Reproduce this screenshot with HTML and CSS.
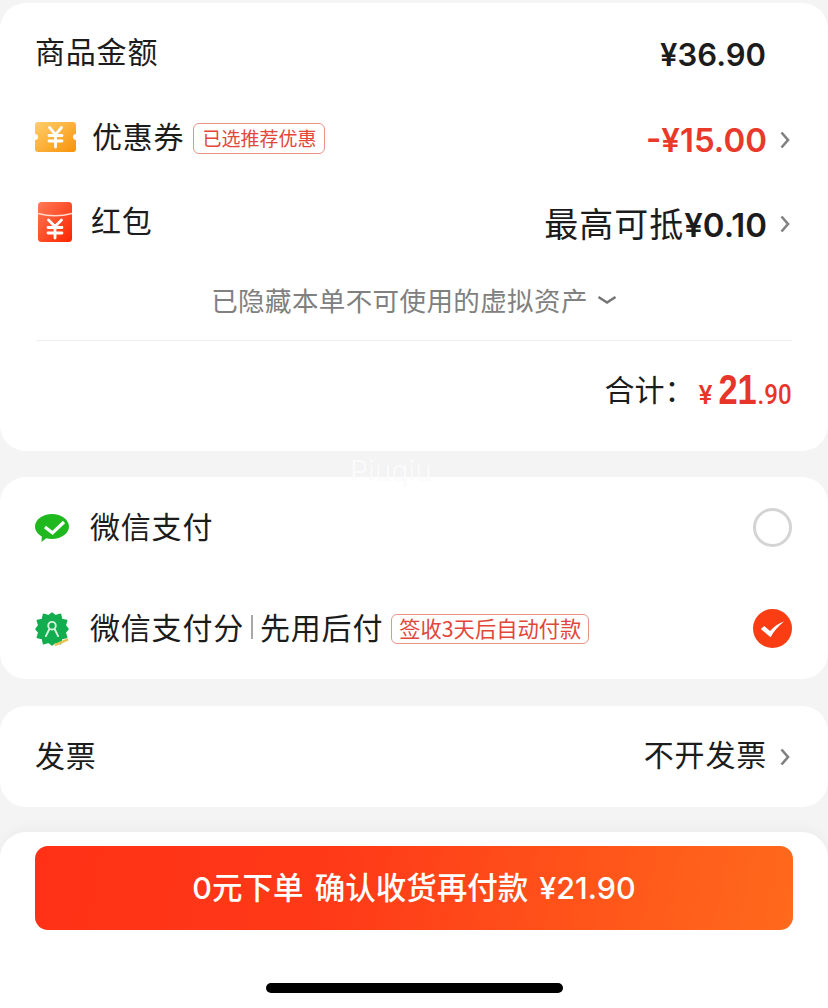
FILE: index.html
```html
<!DOCTYPE html>
<html lang="zh-CN">
<head>
<meta charset="utf-8">
<title>确认订单</title>
<link rel="stylesheet" href="styles.css">
</head>
<body>
<main class="page">
  <section class="card summary">
    <div class="row row-first">
      <span class="label">商品金额</span>
      <span class="amount num">¥36.90</span>
    </div>
    <div class="row row-coupon">
      <div class="lead">
        <svg class="icon-coupon" viewBox="0 0 41 30" aria-hidden="true">
          <defs><linearGradient id="cg" x1="0" y1="0" x2="1" y2="1"><stop offset="0" stop-color="#ffcf6a"/><stop offset="1" stop-color="#f8920a"/></linearGradient></defs>
          <path fill="url(#cg)" d="M3 0H38a3 3 0 0 1 3 3V12a3 3 0 0 0 0 6V27a3 3 0 0 1-3 3H3a3 3 0 0 1-3-3V18a3 3 0 0 0 0-6V3a3 3 0 0 1 3-3Z"/>
          <path fill="none" stroke="#fff" stroke-width="2.800" stroke-linecap="round" d="M14.500 5.500 20.500 12.500 26.500 5.500M14 13.500H27M14 19H27M20.500 13V25"/>
        </svg>
        <span class="label">优惠券</span>
        <span class="tag">已选推荐优惠</span>
      </div>
      <div class="trail">
        <span class="amount num num-lg red">-¥15.00</span>
        <svg class="chev" viewBox="0 0 10 18" aria-hidden="true"><path d="M1.500 1.500 8 9 1.500 16.500"/></svg>
      </div>
    </div>
    <div class="row row-packet">
      <div class="lead">
        <svg class="icon-packet" viewBox="0 0 34 40" aria-hidden="true">
          <defs><linearGradient id="pg" x1="0" y1="0" x2="1" y2="1"><stop offset="0" stop-color="#ff7a55"/><stop offset="1" stop-color="#fb2400"/></linearGradient></defs>
          <rect width="34" height="40" rx="3.500" fill="url(#pg)"/>
          <path fill="none" stroke="#ffd9cc" stroke-width="1.300" d="M0 11.500Q17 16 34 11.500"/>
          <path fill="none" stroke="#fff" stroke-width="2.800" stroke-linecap="round" d="M10.500 18 17 24.500 23.500 18M10 25.500H24M10 31H24M17 25V36"/>
        </svg>
        <span class="label">红包</span>
      </div>
      <div class="trail">
        <span class="amount"><span class="cap cap-lg">最高可抵</span><span class="num num-lg">¥0.10</span></span>
        <svg class="chev" viewBox="0 0 10 18" aria-hidden="true"><path d="M1.500 1.500 8 9 1.500 16.500"/></svg>
      </div>
    </div>
    <div class="note">
      <span>已隐藏本单不可使用的虚拟资产</span>
      <svg class="chev-down" viewBox="0 0 20 10" aria-hidden="true"><path d="M1.500 2 10 7.500 18.500 2"/></svg>
    </div>
    <div class="total">
      <span class="total-label">合计<span class="colon">：</span></span>
      <span class="total-price"><span class="yen">¥</span><span class="big">21</span><span class="cents">.90</span></span>
    </div>
  </section>

  <section class="card pay">
    <div class="row pay-row">
      <div class="lead lead-pay">
        <svg class="icon-pay" viewBox="0 0 34 28" aria-hidden="true">
          <path fill="#1fb91f" d="M17 0C26.400 0 34 5.700 34 12.600S26.400 25 17 25c-2 0-4-.3-5.800-.8L6.500 28l.3-5.500C2.600 20.200 0 16.600 0 12.600 0 5.700 7.600 0 17 0Z"/>
          <path fill="none" stroke="#fff" stroke-width="3.200" d="M10 13 17.500 19 29 8"/>
        </svg>
        <span class="label">微信支付</span>
      </div>
      <span class="radio"></span>
    </div>
    <div class="row pay-row">
      <div class="lead lead-pay">
        <svg class="icon-pay icon-score" viewBox="0 0 36 36" aria-hidden="true">
          <path fill="#12ad4e" stroke="#12ad4e" stroke-width="1.500" stroke-linejoin="round" d="M18 1 21.800 4 27 2.400 28.250 7.750 33.600 9 32 14.250 35 18 32 21.750 33.600 27 28.250 28.250 27 33.600 21.750 32 18 35 14.250 32 9 33.600 7.750 28.250 2.400 27 4 21.750 1 18 4 14.250 2.400 9 7.750 7.750 9 2.400 14.250 4Z"/>
          <circle cx="18" cy="14.500" r="4" fill="none" stroke="#d8f2df" stroke-width="2"/>
          <path fill="none" stroke="#d8f2df" stroke-width="2" stroke-linecap="round" d="M15 18.500 11.500 25.500M21 18.500 24.500 25.500"/>
          <path fill="none" stroke="#e8c050" stroke-width="2.600" d="M21 35 35 29"/>
        </svg>
        <span class="label">微信支付分</span>
        <span class="sep"></span>
        <span class="label">先用后付</span>
        <span class="tag tag-pay">签收3天后自动付款</span>
      </div>
      <svg class="radio-on" viewBox="0 0 40 40" aria-hidden="true">
        <circle cx="20" cy="20" r="20" fill="#fa3d12"/>
        <path fill="#fff" d="M8 20.500 11.500 17.500 17.500 22.500C21 18.500 25.500 15 32 12.500 26 17.500 21.500 22.500 18 29Z"/>
      </svg>
    </div>
  </section>

  <section class="card invoice">
    <div class="row invoice-row">
      <span class="label">发票</span>
      <div class="trail">
        <span class="amount cap">不开发票</span>
        <svg class="chev" viewBox="0 0 10 18" aria-hidden="true"><path d="M1.500 1.500 8 9 1.500 16.500"/></svg>
      </div>
    </div>
  </section>

  <footer class="bar">
    <button class="submit" type="button">0元下单 确认收货再付款 ¥21.90</button>
    <div class="home"></div>
  </footer>

  <span class="mark">Piuqiu</span>
</main>
</body>
</html>
```
FILE: styles.css
```css
* { box-sizing: border-box; }
html, body { margin: 0; padding: 0; }
body {
  background: #f4f4f4;
  color: #1c1c1c;
  font-family: "Noto Sans CJK SC", "Inter", sans-serif;
}
.page {
  position: relative;
  width: 828px;
  height: 1008px;
  padding-top: 3px;
  overflow: hidden;
  display: flex;
  flex-direction: column;
}
.card {
  background: #fff;
  border-radius: 26px;
  padding: 0 36px 0 35px;
}
.summary { height: 448px; }
.pay { height: 202px; margin-top: 26px; }
.invoice { height: 101px; margin-top: 27px; }
.row {
  display: flex;
  align-items: center;
  justify-content: space-between;
}
.row-first { height: 84px; padding-top: 16px; }
.row-coupon { height: 84px; padding-top: 18px; }
.row-packet { height: 84px; padding-top: 18px; }
.lead { display: flex; align-items: center; }
.trail { display: flex; align-items: center; }
.label {
  font-size: 30px;
  line-height: 40px;
  letter-spacing: .8px;
  font-weight: 400;
  margin-bottom: 6px;
  white-space: nowrap;
}
.amount {
  font-size: 30px;
  line-height: 40px;
  margin-top: 4px;
  white-space: nowrap;
}
.row-first .amount { margin-right: 26px; }
.num {
  font-family: "Inter", "Liberation Sans", sans-serif;
  font-weight: 600;
  font-size: 31px;
}
.num-lg { font-size: 33px; font-weight: 600; }
.cap { font-size: 30px; letter-spacing: .8px; }
.cap-lg { font-size: 34px; letter-spacing: 1px; }
.red { color: #e8392a; }
.icon-coupon { width: 41px; height: 30px; margin: 0 16px 2px 0; flex: none; }
.icon-packet { width: 34px; height: 40px; margin: 0 19px 0 3px; flex: none; }
.tag {
  margin-left: 9px;
  height: 31px;
  padding: 0 8px;
  border: 1.500px solid #e8928a;
  border-radius: 6px;
  color: #e2473a;
  font-size: 19px;
  line-height: 27px;
  white-space: nowrap;
}
.chev { width: 10px; height: 18px; margin: 3px 2px 0 13px; flex: none; }
.chev path { fill: none; stroke: #808080; stroke-width: 2.600; }
.note {
  height: 77px;
  margin: 9px 0 0 1px;
  border-bottom: 1px solid #eeeeee;
  padding-bottom: 5px;
  display: flex;
  align-items: center;
  justify-content: center;
  gap: 9px;
  color: #808080;
  font-size: 26.500px;
  letter-spacing: .4px;
}
.chev-down { width: 20px; height: 10px; }
.chev-down path { fill: none; stroke: #757575; stroke-width: 2.600; }
.total {
  display: flex;
  align-items: center;
  justify-content: flex-end;
  height: 92px;
  padding-top: 6px;
}
.total-label {
  font-size: 30px;
  margin: 0 19px 5px 0;
  font-family: "Noto Sans CJK TC", sans-serif;
  white-space: nowrap;
}
.colon { font-feature-settings: "halt"; }
.total-price {
  color: #e8352a;
  display: flex;
  align-items: baseline;
  font-family: "Liberation Sans", sans-serif;
}
.yen { font-family: "Inter", sans-serif; font-size: 25px; font-weight: 600; margin-right: 3px; }
.big {
  display: inline-block;
  font-size: 42px;
  font-weight: 700;
  margin-left: -6px;
  transform: scaleX(.82);
  transform-origin: right center;
}
.cents {
  display: inline-block;
  font-family: "Roboto", sans-serif;
  font-size: 28px;
  font-weight: 500;
  margin-left: -4px;
  transform: scaleX(.86);
  transform-origin: right center;
}
.pay-row { height: 101px; }
.icon-pay { width: 34px; height: 28px; margin-right: 21px; flex: none; }
.icon-score { height: 34px; }
.radio {
  width: 39px;
  height: 39px;
  border: 3px solid #d4d4d4;
  border-radius: 50%;
}
.radio-on { width: 39px; height: 39px; flex: none; }
.sep { width: 2px; height: 24px; margin: 0 7px 3px; background: #a8a8a8; }
.tag-pay { margin-left: 8px; height: 30px; line-height: 26px; padding: 0 7px; font-size: 21.300px; }
.invoice-row { height: 101px; }
.invoice .amount { color: #1c1c1c; margin: 0 0 8px; }
.invoice .chev { margin-top: 0; }
.bar {
  flex: 1;
  margin-top: 25px;
  background: #fff;
  border-radius: 26px 26px 0 0;
  padding: 14px 35px 0;
  box-shadow: 0 -4px 12px rgba(0,0,0,.03);
  display: flex;
  flex-direction: column;
  align-items: center;
}
.submit {
  width: 100%;
  height: 84px;
  border: 0;
  padding: 0 0 4px;
  border-radius: 13px;
  background: linear-gradient(100deg, #ff3016 0%, #ff3a18 40%, #ff6a1c 100%);
  color: #fff;
  font-family: "Inter", "Noto Sans CJK SC", sans-serif;
  font-size: 30.500px;
  font-weight: 500;
  word-spacing: 3px;
}
.home {
  width: 297px;
  height: 10px;
  margin-top: 53px;
  border-radius: 5px;
  background: #000;
}
.mark {
  position: absolute;
  left: 350px;
  top: 455px;
  color: rgba(255,255,255,.85);
  font-family: "Inter", sans-serif;
  font-size: 28px;
  line-height: 32px;
  text-shadow: 0 0 1px rgba(0,0,0,.06);
}
```
